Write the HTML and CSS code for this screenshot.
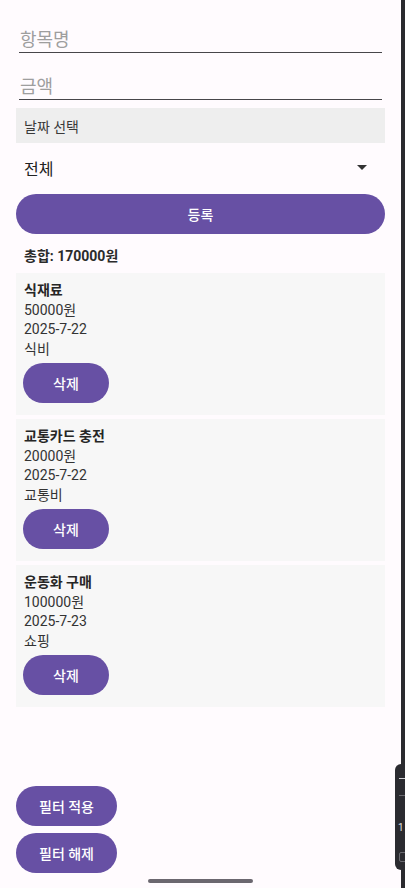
FILE: index.html
```html
<!DOCTYPE html>
<html lang="ko">
<head>
<meta charset="utf-8">
<title>가계부</title>
<link rel="stylesheet" href="styles.css">
</head>
<body>
<div class="screen">
  <div class="statusbar"></div>
  <div class="field field-first">항목명</div>
  <div class="field field-second">금액</div>
  <div class="date-box">날짜 선택</div>
  <div class="spinner">
    <span>전체</span>
    <svg class="caret" width="10" height="5" viewBox="0 0 10 5"><path d="M0 0h10L5 5z" fill="#333"/></svg>
  </div>
  <button class="btn btn-wide">등록</button>
  <div class="total">총합: 170000원</div>
  <div class="list">
    <div class="card">
      <div class="title">식재료</div>
      <div class="line">50000원</div>
      <div class="line">2025-7-22</div>
      <div class="line">식비</div>
      <button class="btn btn-del">삭제</button>
    </div>
    <div class="card">
      <div class="title">교통카드 충전</div>
      <div class="line">20000원</div>
      <div class="line">2025-7-22</div>
      <div class="line">교통비</div>
      <button class="btn btn-del">삭제</button>
    </div>
    <div class="card">
      <div class="title">운동화 구매</div>
      <div class="line">100000원</div>
      <div class="line">2025-7-23</div>
      <div class="line">쇼핑</div>
      <button class="btn btn-del">삭제</button>
    </div>
  </div>
  <div class="bottom">
    <button class="btn btn-filter">필터 적용</button>
    <button class="btn btn-filter">필터 해제</button>
  </div>
  <div class="edge-strip"></div>
  <div class="side-panel">
    <div class="sp-line sp-l1"></div>
    <div class="sp-line sp-l2"></div>
    <div class="sp-num">1</div>
    <div class="sp-box"></div>
  </div>
  <div class="home-indicator"></div>
</div>
</body>
</html>
```
FILE: styles.css
```css
* { box-sizing: border-box; }
html, body { margin: 0; padding: 0; }
body {
  background: #fffbfe;
  font-family: "Roboto", "Noto Sans CJK KR", sans-serif;
  color: #2b2b2b;
}
.screen {
  position: relative;
  width: 405px;
  height: 888px;
  overflow: hidden;
  display: flex;
  flex-direction: column;
  padding: 0 20px 0 16px;
}
.statusbar { height: 24px; flex: none; }
.field {
  margin: 0 3px;
  font-size: 18px;
  line-height: 25px;
  color: #9e9e9e;
  padding-left: 1px;
  border-bottom: 1px solid #47464a;
  flex: none;
}
.field-first { margin-top: 3px; }
.field-second { margin-top: 21px; }
.date-box {
  margin-top: 8px;
  height: 35px;
  background: #eeeeee;
  font-size: 14px;
  color: #3a3a3a;
  padding-left: 8px;
  display: flex;
  align-items: center;
  flex: none;
}
.spinner {
  margin-top: 2px;
  height: 48px;
  display: flex;
  align-items: center;
  justify-content: space-between;
  padding: 0 18px 0 8px;
  font-size: 16px;
  color: #222;
  flex: none;
}
.spinner span { margin-top: -3px; }
.caret { display: block; margin-top: -3px; }
.btn {
  border: none;
  background: #6750a4;
  color: #fff;
  font-family: "Roboto", "Noto Sans CJK KR", sans-serif;
  font-size: 14px;
  font-weight: 500;
  height: 40px;
  border-radius: 20px;
  padding: 0;
  display: block;
  flex: none;
}
.btn-wide { width: 100%; margin-top: 1px; }
.total {
  margin-top: 12px;
  font-size: 14px;
  font-weight: 700;
  line-height: 20px;
  padding-left: 8px;
  color: #2b2b2b;
  flex: none;
}
.list {
  margin-top: 7px;
  display: flex;
  flex-direction: column;
  gap: 4px;
  flex: none;
}
.card {
  height: 142px;
  background: #f7f7f7;
  padding: 8px 8px 11px 8px;
  font-size: 14px;
  line-height: 19.5px;
}
.title { font-weight: 700; color: #262626; }
.line { color: #333; }
.btn-del {
  width: 86px;
  margin: 4px 0 0 -1px;
}
.bottom {
  margin-top: auto;
  padding-bottom: 15px;
  display: flex;
  flex-direction: column;
  gap: 7px;
  flex: none;
}
.btn-filter { width: 101px; }
.edge-strip {
  position: absolute;
  top: 0;
  right: 0;
  width: 4px;
  height: 888px;
  background: #2a2a2e;
}
.side-panel {
  position: absolute;
  left: 395px;
  top: 764px;
  width: 14px;
  height: 106px;
  background: #2b2b30;
  border-radius: 6px 0 0 6px;
}
.sp-line {
  position: absolute;
  left: 4px;
  width: 10px;
  height: 1px;
  background: #9a9aa0;
}
.sp-l1 { top: 14px; background: #d0d0d4; }
.sp-l2 { top: 31px; background: #6a6a70; }
.sp-num {
  position: absolute;
  left: 3px;
  top: 58px;
  font-size: 10px;
  color: #e0e0e0;
  line-height: 12px;
}
.sp-box {
  position: absolute;
  left: 4px;
  top: 88px;
  width: 10px;
  height: 10px;
  border: 1px solid #6a6a70;
  border-radius: 2px;
}
.home-indicator {
  position: absolute;
  left: 148px;
  top: 879px;
  width: 105px;
  height: 4px;
  border-radius: 2px;
  background: #6b676f;
}
```
